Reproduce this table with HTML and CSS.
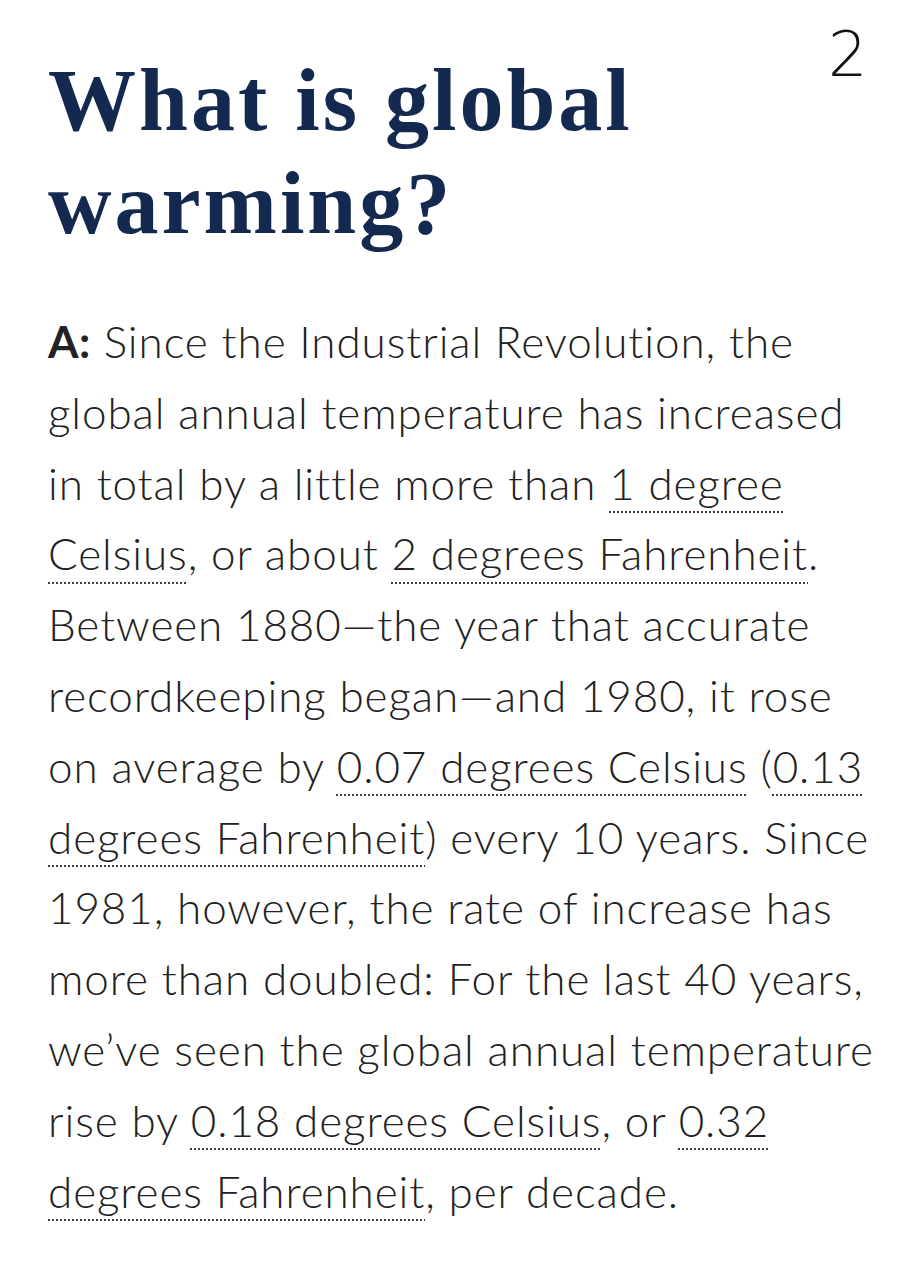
FILE: index.html
```html
<!DOCTYPE html>
<html lang="en">
<head>
<meta charset="utf-8">
<title>What is global warming?</title>
<link rel="stylesheet" href="styles.css">
</head>
<body>
<main class="page">
  <span class="note">2</span>
  <h1 class="title">What is global<br>warming?</h1>
  <p class="answer"><b class="label">A:</b> Since the Industrial Revolution, the<br>global annual temperature has increased<br>in total by a little more than <a class="ref" href="#">1 degree<br>Celsius</a>, or about <a class="ref" href="#">2 degrees Fahrenheit</a>.<br>Between 1880—the year that accurate<br>recordkeeping began—and 1980, it rose<br>on average by <a class="ref" href="#">0.07 degrees Celsius</a> (<a class="ref" href="#">0.13<br>degrees Fahrenheit</a>) every 10 years. Since<br>1981, however, the rate of increase has<br>more than doubled: For the last 40 years,<br>we’ve seen the global annual temperature<br>rise by <a class="ref" href="#">0.18 degrees Celsius</a>, or <a class="ref" href="#">0.32<br>degrees Fahrenheit</a>, per decade.</p>
</main>
</body>
</html>
```

FILE: styles.css
```css
html, body {
  margin: 0;
  padding: 0;
  background: #ffffff;
}

.page {
  position: relative;
  padding: 49px 20px 0 48px;
}

.note {
  position: absolute;
  top: 24px;
  left: 828px;
  font-family: "DejaVu Sans", sans-serif;
  font-weight: 200;
  font-size: 62px;
  line-height: 1;
  color: #111;
}

.title {
  margin: 0;
  font-family: "Liberation Serif", "Times New Roman", serif;
  font-weight: 700;
  font-size: 88px;
  line-height: 103px;
  letter-spacing: 3px;
  color: #14294f;
}

.answer {
  margin: 51px 0 0;
  font-family: Lato, "Noto Sans", sans-serif;
  font-weight: 300;
  font-size: 44px;
  line-height: 70.8px;
  letter-spacing: 0.9px;
  font-variant-ligatures: none;
  color: #222222;
  white-space: nowrap;
}

.label {
  font-weight: 700;
  letter-spacing: 0.5px;
}

.ref {
  color: inherit;
  text-decoration-line: underline;
  text-decoration-style: dotted;
  text-decoration-thickness: 2px;
  text-underline-offset: 12px;
  text-decoration-color: #3a3a3a;
}
```
